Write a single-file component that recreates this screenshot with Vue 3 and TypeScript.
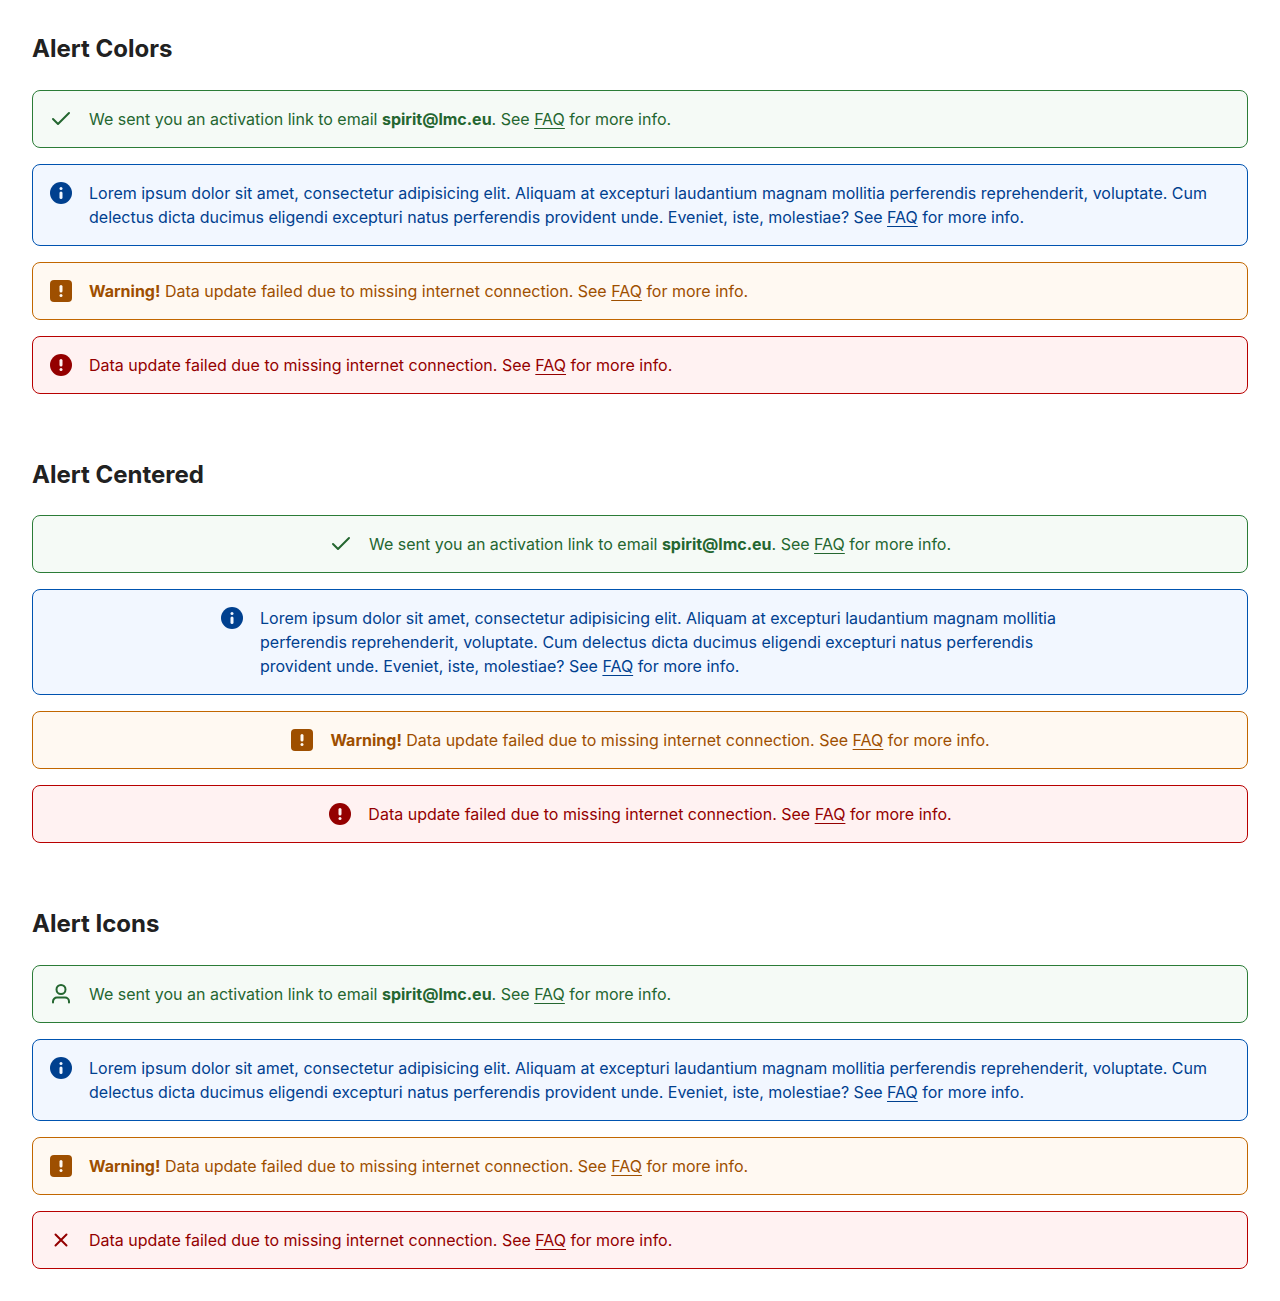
<script setup lang="ts">
type Color = 'success' | 'informative' | 'warning' | 'danger'
type Icon = 'check' | 'info' | 'warning' | 'danger' | 'profile' | 'close'

interface Alert {
  color: Color
  icon: Icon
  lead?: string
  text: string
  email?: string
}

interface Section {
  title: string
  centered: boolean
  alerts: Alert[]
}

const failure = 'Data update failed due to missing internet connection.'
const lorem =
  'Lorem ipsum dolor sit amet, consectetur adipisicing elit. Aliquam at excepturi laudantium magnam mollitia perferendis reprehenderit, voluptate. Cum delectus dicta ducimus eligendi excepturi natus perferendis provident unde. Eveniet, iste, molestiae?'

const makeAlerts = (successIcon: Icon, dangerIcon: Icon): Alert[] => [
  { color: 'success', icon: successIcon, text: 'We sent you an activation link to email', email: 'spirit@lmc.eu' },
  { color: 'informative', icon: 'info', text: lorem },
  { color: 'warning', icon: 'warning', lead: 'Warning!', text: failure },
  { color: 'danger', icon: dangerIcon, text: failure },
]

const sections: Section[] = [
  { title: 'Alert Colors', centered: false, alerts: makeAlerts('check', 'danger') },
  { title: 'Alert Centered', centered: true, alerts: makeAlerts('check', 'danger') },
  { title: 'Alert Icons', centered: false, alerts: makeAlerts('profile', 'close') },
]
</script>

<template>
  <main class="page">
    <section v-for="section in sections" :key="section.title" class="section">
      <h2 class="title">{{ section.title }}</h2>
      <div class="stack">
        <div
          v-for="alert in section.alerts"
          :key="alert.color"
          role="alert"
          class="alert"
          :class="[alert.color, { centered: section.centered }]"
        >
          <svg class="icon" viewBox="0 0 24 24" aria-hidden="true">
            <path v-if="alert.icon === 'check'" class="line" d="M4 12l5 5L20 6" />
            <template v-else-if="alert.icon === 'info'">
              <circle cx="12" cy="12" r="11" />
              <circle class="cut" cx="12" cy="7.5" r="1.5" />
              <rect class="cut" x="10.5" y="10.6" width="3" height="7.4" rx="1.5" />
            </template>
            <template v-else-if="alert.icon === 'warning' || alert.icon === 'danger'">
              <rect v-if="alert.icon === 'warning'" x="1" y="1" width="22" height="22" rx="4" />
              <circle v-else cx="12" cy="12" r="11" />
              <rect class="cut" x="10.5" y="6" width="3" height="7.4" rx="1.5" />
              <circle class="cut" cx="12" cy="16.5" r="1.5" />
            </template>
            <template v-else-if="alert.icon === 'profile'">
              <circle class="line" cx="12" cy="7.5" r="4.5" />
              <path class="line" d="M4 20.5v-1a4 4 0 0 1 4-4h8a4 4 0 0 1 4 4v1" />
            </template>
            <path v-else class="line" d="M6.5 6.5l11 11M17.5 6.5l-11 11" />
          </svg>
          <p class="message">
            <template v-if="alert.lead"><strong>{{ alert.lead }}</strong>{{ ' ' }}</template>{{ alert.text }}
            <template v-if="alert.email"><strong>{{ alert.email }}</strong>.</template>
            See <a href="#faq" class="link">FAQ</a> for more info.
          </p>
        </div>
      </div>
    </section>
  </main>
</template>

<style>
body {
  margin: 0;
  background: #fff;
}
</style>

<style scoped>
.page {
  display: flex;
  flex-direction: column;
  gap: 64px;
  padding: 32px;
  font-family: Inter, sans-serif;
  font-optical-sizing: none;
  font-size: 16px;
  line-height: 24px;
}

.title {
  margin: 0 0 24px;
  color: #212121;
  font-size: 24px;
  font-weight: 700;
  line-height: 1.4;
}

.stack {
  display: flex;
  flex-direction: column;
  gap: 16px;
}

.alert {
  display: flex;
  gap: 16px;
  padding: 16px;
  border: 1px solid var(--border);
  border-radius: 8px;
  background: var(--background);
  color: var(--content);
}

.centered {
  justify-content: center;
}

.centered .message {
  max-width: 800px;
}

.success {
  --content: #246630;
  --border: #2b7c37;
  --background: #f5faf6;
}

.informative {
  --content: #00408f;
  --border: #0053b0;
  --background: #f2f7ff;
}

.warning {
  --content: #9e4f00;
  --border: #c26700;
  --background: #fff9f2;
}

.danger {
  --content: #940000;
  --border: #b80000;
  --background: #fff2f2;
}

.icon {
  flex: none;
  width: 24px;
  height: 24px;
  fill: currentColor;
}

.cut {
  fill: var(--background);
}

.line {
  fill: none;
  stroke: currentColor;
  stroke-width: 2;
  stroke-linecap: round;
  stroke-linejoin: round;
}

.message {
  margin: 0;
}

.link {
  color: inherit;
  text-decoration: underline 1px;
  text-underline-offset: 3px;
  text-decoration-skip-ink: none;
}
</style>
